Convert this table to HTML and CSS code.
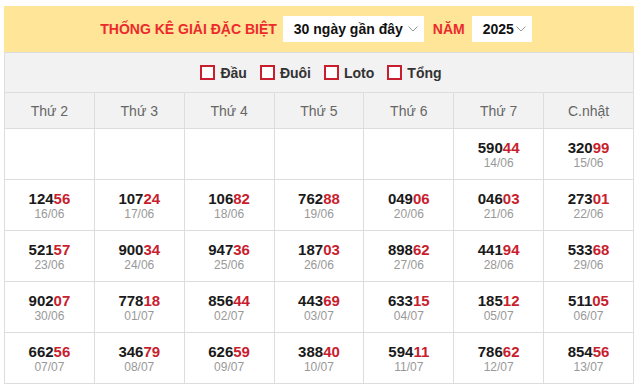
FILE: index.html
```html
<!DOCTYPE html>
<html lang="vi">
<head>
<meta charset="utf-8">
<link rel="stylesheet" href="styles.css">
</head>
<body>
<div class="wrap">
  <div class="head">
    <span class="title">THỐNG KÊ GIẢI ĐẶC BIỆT</span>
    <span class="sel sel-days">30 ngày gần đây<svg class="chev" viewBox="0 0 10 6" width="10" height="6"><path d="M0.5 0.5 L5 5 L9.5 0.5" fill="none" stroke="#999" stroke-width="1"/></svg></span>
    <span class="title nam">NĂM</span>
    <span class="sel sel-year">2025<svg class="chev" viewBox="0 0 10 6" width="10" height="6"><path d="M0.5 0.5 L5 5 L9.5 0.5" fill="none" stroke="#999" stroke-width="1"/></svg></span>
  </div>
  <div class="filters">
    <label class="opt"><span class="box"></span>Đầu</label>
    <label class="opt"><span class="box"></span>Đuôi</label>
    <label class="opt"><span class="box"></span>Loto</label>
    <label class="opt"><span class="box"></span>Tổng</label>
  </div>
  <table class="grid">
    <thead>
      <tr><th>Thứ 2</th><th>Thứ 3</th><th>Thứ 4</th><th>Thứ 5</th><th>Thứ 6</th><th>Thứ 7</th><th>C.nhật</th></tr>
    </thead>
    <tbody>
      <tr><td></td><td></td><td></td><td></td><td></td>
        <td><div class="num">590<b>44</b></div><div class="date">14/06</div></td>
        <td><div class="num">320<b>99</b></div><div class="date">15/06</div></td></tr>
      <tr>
        <td><div class="num">124<b>56</b></div><div class="date">16/06</div></td>
        <td><div class="num">107<b>24</b></div><div class="date">17/06</div></td>
        <td><div class="num">106<b>82</b></div><div class="date">18/06</div></td>
        <td><div class="num">762<b>88</b></div><div class="date">19/06</div></td>
        <td><div class="num">049<b>06</b></div><div class="date">20/06</div></td>
        <td><div class="num">046<b>03</b></div><div class="date">21/06</div></td>
        <td><div class="num">273<b>01</b></div><div class="date">22/06</div></td>
      </tr>
      <tr>
        <td><div class="num">521<b>57</b></div><div class="date">23/06</div></td>
        <td><div class="num">900<b>34</b></div><div class="date">24/06</div></td>
        <td><div class="num">947<b>36</b></div><div class="date">25/06</div></td>
        <td><div class="num">187<b>03</b></div><div class="date">26/06</div></td>
        <td><div class="num">898<b>62</b></div><div class="date">27/06</div></td>
        <td><div class="num">441<b>94</b></div><div class="date">28/06</div></td>
        <td><div class="num">533<b>68</b></div><div class="date">29/06</div></td>
      </tr>
      <tr>
        <td><div class="num">902<b>07</b></div><div class="date">30/06</div></td>
        <td><div class="num">778<b>18</b></div><div class="date">01/07</div></td>
        <td><div class="num">856<b>44</b></div><div class="date">02/07</div></td>
        <td><div class="num">443<b>69</b></div><div class="date">03/07</div></td>
        <td><div class="num">633<b>15</b></div><div class="date">04/07</div></td>
        <td><div class="num">185<b>12</b></div><div class="date">05/07</div></td>
        <td><div class="num">511<b>05</b></div><div class="date">06/07</div></td>
      </tr>
      <tr>
        <td><div class="num">662<b>56</b></div><div class="date">07/07</div></td>
        <td><div class="num">346<b>79</b></div><div class="date">08/07</div></td>
        <td><div class="num">626<b>59</b></div><div class="date">09/07</div></td>
        <td><div class="num">388<b>40</b></div><div class="date">10/07</div></td>
        <td><div class="num">594<b>11</b></div><div class="date">11/07</div></td>
        <td><div class="num">786<b>62</b></div><div class="date">12/07</div></td>
        <td><div class="num">854<b>56</b></div><div class="date">13/07</div></td>
      </tr>
    </tbody>
  </table>
</div>
</body>
</html>
```
FILE: styles.css
```css
html, body {
  margin: 0;
  padding: 0;
  background: #fff;
  font-family: "Liberation Sans", Arial, sans-serif;
}
.wrap {
  width: 630px;
  margin: 6px 0 0 4px;
}
.head {
  height: 46px;
  background: #ffe597;
  display: flex;
  align-items: center;
  justify-content: center;
  padding-right: 6px;
  box-sizing: border-box;
}
.title {
  color: #ec2a2c;
  font-weight: bold;
  font-size: 14px;
}
.nam {
  margin: 0 7px 0 9px;
}
.sel {
  background: #fff;
  height: 26px;
  display: flex;
  align-items: center;
  box-sizing: border-box;
  font-weight: bold;
  font-size: 14px;
  color: #111;
  padding: 0 6px 0 11px;
}
.sel-days {
  width: 141px;
  margin-left: 6px;
}
.sel-year {
  width: 60px;
}
.chev {
  margin-left: auto;
}
.filters {
  height: 40px;
  background: #f2f2f2;
  border: 1px solid #ddd;
  border-bottom: 0;
  box-sizing: border-box;
  display: flex;
  align-items: center;
  justify-content: center;
  gap: 13px;
  padding-left: 4px;
}
.opt {
  display: flex;
  align-items: center;
  gap: 5px;
  font-weight: bold;
  font-size: 14px;
  color: #333;
}
.box {
  width: 15px;
  height: 15px;
  box-sizing: border-box;
  border: 2px solid #c81e2e;
  background: #fff;
}
.grid {
  width: 630px;
  border-collapse: collapse;
  table-layout: fixed;
}
.grid th, .grid td {
  border: 1px solid #ddd;
  text-align: center;
  padding: 0;
}
.grid th {
  height: 35px;
  background: #f2f2f2;
  color: #666;
  font-weight: normal;
  font-size: 14px;
}
.grid td {
  height: 50px;
  vertical-align: middle;
}
.num {
  font-weight: bold;
  font-size: 15px;
  line-height: 17px;
  color: #1a1a1a;
}
.num b {
  color: #c81e2e;
}
.date {
  font-size: 12px;
  line-height: 14px;
  color: #999;
}
```
